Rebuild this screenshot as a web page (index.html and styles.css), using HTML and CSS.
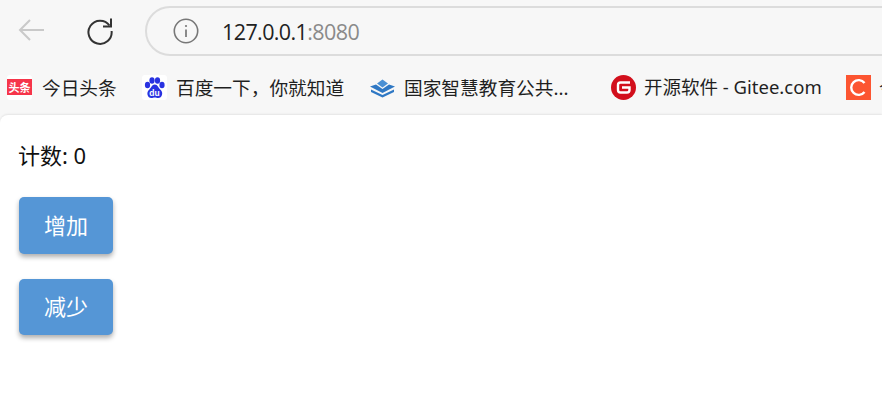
FILE: index.html
```html
<!DOCTYPE html>
<html lang="zh">
<head>
<meta charset="utf-8">
<title>127.0.0.1:8080</title>
<link rel="stylesheet" href="styles.css">
</head>
<body>
<div class="chrome">
  <div class="toolbar">
    <svg class="nav-back" width="30" height="30" viewBox="0 0 30 30"><path d="M28 15H4M14 5 4 15l10 10" fill="none" stroke="#c9c9c9" stroke-width="2"/></svg>
    <svg class="nav-reload" width="30" height="30" viewBox="0 0 30 30"><path d="M24.500 10.500A11.600 11.600 0 1 0 26.600 16" fill="none" stroke="#333" stroke-width="2"/><path d="M26 3.500V11.500H18" fill="none" stroke="#333" stroke-width="2"/></svg>
    <div class="omnibox">
      <svg class="info" width="26" height="26" viewBox="0 0 26 26"><circle cx="13" cy="13" r="11.700" fill="none" stroke="#777" stroke-width="1.600"/><path d="M13 11.500V19" stroke="#777" stroke-width="1.700"/><circle cx="13" cy="8" r="1.100" fill="#777"/></svg>
      <span class="host">127.0.0.1<span class="port">:8080</span></span>
    </div>
  </div>
  <div class="bookmarks">
    <div class="bm bm-1">
      <span class="tile"><svg width="25" height="25" viewBox="0 0 25 25"><rect x="0" y="4" width="25" height="16" fill="#f6354a"/><text x="1.500" y="17" class="toutiao">头条</text></svg></span>
      <span>今日头条</span>
    </div>
    <div class="bm bm-2">
      <span class="tile"><svg width="25" height="25" viewBox="0 0 25 25"><g fill="#2932e1"><ellipse cx="5.500" cy="10" rx="2.600" ry="3.300"/><ellipse cx="10" cy="5.500" rx="2.600" ry="3.300"/><ellipse cx="15.500" cy="5.500" rx="2.600" ry="3.300"/><ellipse cx="20" cy="10" rx="2.600" ry="3.300"/><path d="M12.800 9.500c-3 0-3.500 3.500-6 5.500-2.800 2.800-1.200 8 2.500 8 1.500 0 2.200-.6 3.500-.6s2 .6 3.500.6c3.700 0 5.300-5.200 2.500-8-2.500-2-3-5.500-6-5.500z"/></g><text x="7.200" y="20.500" class="du">du</text></svg></span>
      <span>百度一下，你就知道</span>
    </div>
    <div class="bm bm-3">
      <span class="tile"><svg width="25" height="25" viewBox="0 0 25 25"><path d="M0 11.500 6 9.500 12.500 14 19 9.500 25 11.500 12.500 18z" fill="#2f78c4"/><path d="M1 14.500 12.500 20 24 14.500V17L12.500 22.500 1 17z" fill="#2f78c4"/><path d="M7 8.500 12.500 4.500 18 8.500 12.500 12.500z" fill="#4a90d4"/></svg></span>
      <span>国家智慧教育公共...</span>
    </div>
    <div class="bm bm-4">
      <span class="tile"><svg width="25" height="25" viewBox="0 0 25 25"><circle cx="12.500" cy="12.500" r="12.500" fill="#d20f1c"/><path d="M19 7.500H9.500Q7 7.500 7 10v5q0 2.500 2.500 2.500H16q2.500 0 2.500-2.500v-2.500H11" fill="none" stroke="#fff" stroke-width="2.400"/></svg></span>
      <span class="gitee">开源软件 - Gitee.com</span>
    </div>
    <div class="bm bm-5">
      <span class="tile"><svg width="25" height="25" viewBox="0 0 25 25"><rect width="25" height="25" fill="#fc5531"/><path d="M18.500 8A7.400 7.400 0 1 0 18.500 17" fill="none" stroke="#fff" stroke-width="2.400"/></svg></span>
      <span>今日</span>
    </div>
  </div>
</div>
<main class="page">
  <p class="count">计数: 0</p>
  <button class="btn btn-first">增加</button>
  <button class="btn btn-second">减少</button>
</main>
</body>
</html>
```
FILE: styles.css
```css
* { box-sizing: border-box; }
html, body { margin: 0; height: 100%; overflow: hidden; }
body {
  width: 882px;
  height: 417px;
  background: #f7f7f7;
  font-family: "Noto Sans", "Noto Sans CJK SC", sans-serif;
  color: #1f1f1f;
  display: flex;
  flex-direction: column;
}
.chrome { flex: none; height: 115px; overflow: hidden; }
.toolbar {
  display: flex;
  align-items: center;
  height: 62px;
}
.nav-back { flex: none; margin: 0 0 2px 16px; }
.nav-reload { flex: none; margin: 0 0 2px 39px; }
.omnibox {
  flex: none;
  width: 800px;
  height: 50px;
  margin-left: 30px;
  border: 2px solid #dcdcdc;
  border-radius: 25px;
  display: flex;
  align-items: center;
  padding-left: 26px;
  background: #f7f7f7;
}
.info { flex: none; }
.host {
  margin-left: 23px;
  font-family: "Open Sans", sans-serif;
  font-size: 21.500px;
  letter-spacing: -0.600px;
  color: #222;
}
.port { color: #8a8a8a; }
.bookmarks {
  display: flex;
  align-items: center;
  height: 50px;
  font-size: 18.700px;
  white-space: nowrap;
  width: 882px;
  overflow: hidden;
}
.bm { flex: none; display: flex; align-items: center; gap: 9px; }
.bm span:last-child { position: relative; top: -1px; }
.tile {
  flex: none;
  width: 25px;
  height: 25px;
  display: block;
  background: #fff;
  border-radius: 3px;
}
.tile svg { display: block; }
.bm-1 { margin-left: 7px; gap: 10px; width: 135px; }
.bm-2 { width: 228px; }
.bm-3 { width: 241px; }
.bm-4 { width: 235px; gap: 8px; }
.bm-3 .tile, .bm-4 .tile { background: transparent; }
.bm-5 { gap: 8px; }
.gitee { font-size: 18.500px; }
.toutiao { font-size: 11px; font-weight: 700; fill: #fff; }
.du { font-size: 8.500px; font-weight: 700; fill: #fff; font-family: "Liberation Sans", sans-serif; }
.page {
  flex: 1;
  background: #fff;
  border-top-left-radius: 8px;
  box-shadow: 0 -1px 2px rgba(0,0,0,.08);
  padding: 25px 19px 0;
}
.count {
  margin: 0 0 27px -1px;
  font-size: 22px;
  line-height: 30px;
  color: #111;
}
.btn {
  display: block;
  width: 94px;
  height: 57px;
  margin: 0;
  border: 0;
  border-radius: 5px;
  background: #5596d6;
  color: #fff;
  font-family: "Noto Sans CJK SC", sans-serif;
  font-size: 22px;
  box-shadow: 0 3px 5px rgba(0,0,0,.32);
  padding: 0 0 4px;
}
.btn-first { margin-bottom: 25px; }
.btn-second { height: 56px; }
```
